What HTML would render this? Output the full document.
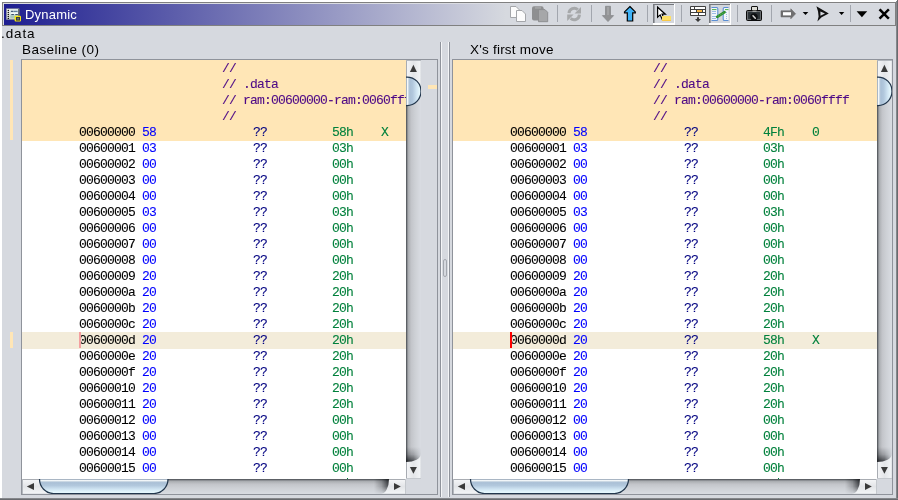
<!DOCTYPE html>
<html><head><meta charset="utf-8">
<style>
html,body{margin:0;padding:0}
body{width:898px;height:500px;position:relative;overflow:hidden;background:#d6d9df;font-family:"Liberation Sans",sans-serif}
.abs{position:absolute}
.t{position:absolute;font-family:"Liberation Mono",monospace;font-size:13px;letter-spacing:-0.8px;line-height:16px;white-space:pre}
.cm{color:#4e0a86}
.ad{color:#000}
.by{color:#0000ff}
.qq{color:#000080}
.vl{color:#00803c}
.lst{position:absolute;overflow:hidden;background:#fff}
.t,.ui{will-change:transform}
.t{-webkit-text-stroke:0.1px currentColor}
.ui{position:absolute;font-family:"Liberation Sans",sans-serif;font-size:13px;line-height:16px;white-space:pre;color:#000}
</style></head><body>
<!-- window edges -->
<div class="abs" style="left:0;top:0;width:898px;height:2px;background:#fff"></div>
<div class="abs" style="left:0;top:0;width:2px;height:500px;background:#fff"></div>
<div class="abs" style="left:896px;top:0;width:2px;height:500px;background:linear-gradient(to right,#939599,#5a5c60)"></div>
<div class="abs" style="left:896px;top:0;width:1px;height:1px;background:#fff"></div>
<div class="abs" style="left:0;top:498px;width:898px;height:2px;background:linear-gradient(to bottom,#939599,#5a5c60)"></div>

<!-- title bar -->
<div class="abs" style="left:2px;top:2px;width:894px;height:24px;box-sizing:border-box;border:1px solid #808080;border-right-color:#808080"></div>
<div class="abs" style="left:3px;top:3px;width:892px;height:1px;background:#dadce2"></div>
<div class="abs" style="left:3px;top:3px;width:1px;height:22px;background:#dadce2"></div>
<div class="abs" style="left:4px;top:4px;width:891px;height:21px;background:linear-gradient(to right,#1e1e90 0px,#d6d9df 502px,#d6d9df 891px)"></div>
<svg class="abs" style="left:0;top:0" width="898" height="27" viewBox="0 0 898 27">
<defs>
<linearGradient id="filmg" x1="0" x2="0" y1="0" y2="1"><stop offset="0" stop-color="#f4f4f0"/><stop offset="1" stop-color="#c8d0c8"/></linearGradient>
<linearGradient id="yelg" x1="0" x2="0" y1="0" y2="1"><stop offset="0" stop-color="#ffea70"/><stop offset="1" stop-color="#ffd040"/></linearGradient>
</defs>
<!-- title icon: film strip -->
<rect x="6.5" y="8.8" width="12.6" height="10.6" fill="url(#filmg)" stroke="#9aa09a" stroke-width="0.5"/>
<rect x="10.3" y="9.6" width="7.8" height="8.6" fill="#c4dce0"/>
<rect x="10.3" y="9.6" width="7.8" height="1.2" fill="#e8f2f0"/>
<rect x="11" y="10.8" width="2.5" height="1" fill="#2a3e64"/><rect x="14" y="10.8" width="3.6" height="1" fill="#4a6a90"/>
<rect x="10.5" y="12.5" width="7.5" height="1.5" fill="#f4f8f8"/>
<rect x="11.3" y="14.2" width="2.6" height="0.9" fill="#1e3050"/><rect x="15.3" y="14.2" width="2.6" height="0.9" fill="#1e3050"/>
<rect x="10.3" y="15.5" width="7.8" height="2.7" fill="#a8c8b8"/>
<rect x="18.3" y="9" width="1" height="7" fill="#3a4444"/>
<circle cx="8.3" cy="10.4" r="0.7" fill="#000"/><circle cx="8.3" cy="12.4" r="0.7" fill="#000"/><circle cx="8.3" cy="14.4" r="0.7" fill="#000"/><circle cx="8.3" cy="16.4" r="0.7" fill="#000"/><circle cx="8.3" cy="18.4" r="0.7" fill="#000"/>
<rect x="14.6" y="15.8" width="6.4" height="5.6" rx="1" fill="#f2e410"/>
<rect x="16" y="17" width="4" height="3.6" fill="#3a3e3a"/>
<circle cx="18" cy="18.8" r="1" fill="#707470"/>
<!-- copy (disabled) -->
<path d="M510.5 6.5 H516 L519.5 10 V17.5 H510.5 Z" fill="#fcfcfc" stroke="#a4a6aa" stroke-width="1"/>
<path d="M516.5 10.5 H522 L525.5 14 V21.5 H516.5 Z" fill="#fcfcfc" stroke="#a4a6aa" stroke-width="1"/>
<!-- paste (disabled) -->
<rect x="532" y="6.3" width="11.6" height="14.3" rx="2" fill="#8e8f91"/>
<rect x="535" y="6.3" width="6" height="2.5" fill="#a2a3a5"/>
<path d="M538.5 9.6 H545 L547.7 12.3 V21.7 H538.5 Z" fill="#a6a7a9" stroke="#8a8b8d" stroke-width="0.9"/>
<!-- separator -->
<rect x="557" y="5" width="1" height="17" fill="#a2a6ae"/>
<!-- refresh (disabled) -->
<path d="M569 13.2 A5.3 5.3 0 0 1 577.8 9.6" fill="none" stroke="#a6a8aa" stroke-width="3"/>
<path d="M581 7 V13.4 H574.6 Z" fill="#a6a8aa"/>
<path d="M579.4 14.6 A5.3 5.3 0 0 1 570.6 18.4" fill="none" stroke="#a6a8aa" stroke-width="3"/>
<path d="M567.2 21 V14.6 H573.6 Z" fill="#a6a8aa"/>
<rect x="591" y="5" width="1" height="17" fill="#a2a6ae"/>
<!-- down arrow (disabled) -->
<path d="M605.5 6.3 H610.5 V15.6 H613.6 L608 21.6 L602.4 15.6 H605.5 Z" fill="#929395" stroke="#838486" stroke-width="0.7"/>
<rect x="607" y="7" width="2" height="8" fill="#a2a3a5"/>
<!-- up arrow -->
<path d="M629.9 6.5 L635.3 11.9 V12.8 H632.7 V21 H627.3 V12.8 H624.5 V11.9 Z" fill="#3fb2f6" stroke="#000" stroke-width="1.2" stroke-linejoin="miter" stroke-miterlimit="2"/>
<rect x="647" y="5" width="1" height="17" fill="#a2a6ae"/>
<!-- toggle button 1 (pressed) -->
<rect x="653" y="4" width="22" height="21" fill="#fff"/>
<rect x="653" y="4" width="21" height="19" fill="#76797f"/>
<rect x="654" y="5" width="20" height="18" fill="#d4d7dd"/>
<rect x="654" y="5" width="1" height="18" fill="#9ea1a7"/>
<path d="M657.6 7.2 V17.2 L660.2 14.9 L662.4 19.8 L664.2 19 L662.1 14.2 H665.4 Z" fill="#fff" stroke="#000" stroke-width="1.2" stroke-linejoin="miter"/>
<rect x="662" y="16" width="9" height="5" fill="#ffe066"/>
<rect x="662" y="20" width="9" height="1" fill="#f8c848"/>
<rect x="681" y="5" width="1" height="17" fill="#a2a6ae"/>
<!-- table with arrow -->
<rect x="690" y="6" width="16" height="10" rx="1" fill="#3f3f3f"/>
<rect x="691" y="7" width="3" height="2" fill="#fff"/><rect x="695" y="7" width="10" height="2" fill="#fff"/>
<rect x="691" y="10" width="5" height="2" fill="#fff"/><rect x="697" y="10" width="5" height="2" fill="#f6b746"/><rect x="703" y="10" width="2" height="2" fill="#fff"/>
<rect x="691" y="13" width="7" height="2" fill="#fff"/><rect x="699" y="13" width="6" height="2" fill="#fff"/>
<path d="M697 17.2 H699 V19 H701 L698 22 L695 19 H697 Z" fill="#3a3a3a"/>
<!-- toggle button 2 (pressed) -->
<rect x="709" y="4" width="22" height="21" fill="#fff"/>
<rect x="709" y="4" width="21" height="19" fill="#76797f"/>
<rect x="710" y="5" width="20" height="18" fill="#d4d7dd"/>
<rect x="710" y="5" width="1" height="18" fill="#9ea1a7"/>
<path d="M711.5 7.5 H716.5 Q717.8 7.5 717.8 8.8 V19.2 Q717.8 20.5 716.5 20.5 H711.5 Z" fill="#f4f6fa"/>
<path d="M711.5 7.5 H716.5 Q717.8 7.5 717.8 8.8 V19.2 Q717.8 20.5 716.5 20.5 H711.5" fill="none" stroke="#5a8ed4" stroke-width="1.1"/>
<rect x="712" y="9" width="4.5" height="1.1" fill="#5cb85c"/>
<rect x="712" y="11" width="4" height="1" fill="#9dbbe4"/><rect x="712" y="13" width="4" height="1" fill="#9dbbe4"/><rect x="712" y="16" width="4" height="1" fill="#9dbbe4"/><rect x="712" y="18" width="4" height="1" fill="#9dbbe4"/>
<path d="M728.5 7.5 H724.5 Q723.2 7.5 723.2 8.8 V19.2 Q723.2 20.5 724.5 20.5 H728.5 Z" fill="#f4f6fa"/>
<path d="M728.5 7.5 H724.5 Q723.2 7.5 723.2 8.8 V19.2 Q723.2 20.5 724.5 20.5 H728.5" fill="none" stroke="#5a8ed4" stroke-width="1.1"/>
<rect x="725" y="9" width="3.5" height="1.1" fill="#5cb85c"/>
<rect x="726" y="12" width="1" height="1" fill="#9dbbe4"/><rect x="726" y="14" width="1" height="1" fill="#9dbbe4"/><rect x="726" y="16" width="1" height="1" fill="#9dbbe4"/><rect x="726" y="18" width="1" height="1" fill="#9dbbe4"/>
<path d="M717.2 16.8 L724.6 12.2" stroke="#2f8f30" stroke-width="2.6" stroke-linecap="round"/>
<path d="M718 16.2 L724 12.6" stroke="#6cc06c" stroke-width="0.8" stroke-dasharray="1 1.2"/>
<rect x="737" y="5" width="1" height="17" fill="#a2a6ae"/>
<!-- camera -->
<rect x="751.5" y="6.5" width="6" height="4.5" rx="0.5" fill="#dcdcd6" stroke="#111" stroke-width="1"/>
<rect x="746.5" y="10.5" width="15" height="10" rx="1" fill="#2c3236" stroke="#0a0a0a" stroke-width="1"/>
<rect x="747.6" y="11.6" width="12.8" height="7.8" fill="none" stroke="#74777a" stroke-width="0.9"/>
<rect x="752.5" y="10.6" width="4" height="1" fill="#c8c8c4"/>
<circle cx="754" cy="17" r="3.7" fill="#0c0e10"/>
<path d="M753 15.8 L755.3 18.3" stroke="#d4d4d4" stroke-width="1.5" stroke-linecap="round"/>
<rect x="771" y="5" width="1" height="17" fill="#a2a6ae"/>
<!-- right arrow -->
<path d="M781 10.8 H790.8 V8.8 L795.6 13.8 L790.8 18.8 V16.9 H781 Z" fill="#6f6f70" stroke="#6a6a6a" stroke-width="0.6"/>
<rect x="783" y="12.2" width="8" height="3.2" fill="#fff"/>
<path d="M802.7 12 H808.3 L805.5 15 Z" fill="#000"/>
<!-- navigate -->
<path d="M816.4 6.2 L828.8 13.4 L821.6 17.2 L817.4 21.4 L818.6 16.6 L818 11.2 Z M820.4 11.6 L825 13.6 L820.4 15.8 Z" fill="#111" fill-rule="evenodd"/>
<path d="M838.9 12 H844.3 L841.6 15 Z" fill="#000"/>
<rect x="850" y="5" width="1" height="17" fill="#a2a6ae"/>
<!-- big down triangle -->
<path d="M856.6 11.2 H867.2 L861.9 17.3 Z" fill="#000"/>
<!-- close X -->
<path d="M880.4 10.2 L888 17.8 M888 10.2 L880.4 17.8" stroke="#000" stroke-width="2.5" stroke-linecap="square"/>
</svg>
<div class="ui" style="left:25px;top:7px;color:#fff;font-size:13px;letter-spacing:0.2px">Dynamic</div>

<div class="ui" style="left:1px;top:26px;font-size:13.5px;letter-spacing:0.9px">.data</div>
<div class="ui" style="left:22px;top:42px;font-size:13.5px;letter-spacing:0.45px">Baseline (0)</div>
<div class="ui" style="left:470px;top:42px;font-size:13.5px;letter-spacing:0.22px">X's first move</div>

<!-- left margin markers -->
<div class="abs" style="left:10px;top:60px;width:3px;height:80px;background:#ffe6b6"></div>
<div class="abs" style="left:10px;top:332px;width:3px;height:16px;background:#ffe6b6"></div>

<!-- left panel -->
<div class="abs" style="left:21px;top:59px;width:417px;height:436px;box-sizing:border-box;border:1px solid #8f939b"></div>
<div class="lst" style="left:22px;top:60px;width:384px;height:419px">
<div style="position:absolute;left:0;top:0;width:384px;height:81px;background:#ffe6b6"></div>
<div style="position:absolute;left:0;top:272px;width:384px;height:17px;background:#f3ecda"></div>
<div class="t cm" style="left:200px;top:1px">//</div>
<div class="t cm" style="left:200px;top:17px">// .data</div>
<div class="t cm" style="left:200px;top:33px">// ram:00600000-ram:0060ffff</div>
<div class="t cm" style="left:200px;top:49px">//</div>
<div class="t ad" style="left:57px;top:65px">00600000</div>
<div class="t by" style="left:120px;top:65px">58</div>
<div class="t qq" style="left:231px;top:65px">??</div>
<div class="t vl" style="left:310px;top:65px">58h</div>
<div class="t vl" style="left:359px;top:65px">X</div>
<div class="t ad" style="left:57px;top:81px">00600001</div>
<div class="t by" style="left:120px;top:81px">03</div>
<div class="t qq" style="left:231px;top:81px">??</div>
<div class="t vl" style="left:310px;top:81px">03h</div>
<div class="t ad" style="left:57px;top:97px">00600002</div>
<div class="t by" style="left:120px;top:97px">00</div>
<div class="t qq" style="left:231px;top:97px">??</div>
<div class="t vl" style="left:310px;top:97px">00h</div>
<div class="t ad" style="left:57px;top:113px">00600003</div>
<div class="t by" style="left:120px;top:113px">00</div>
<div class="t qq" style="left:231px;top:113px">??</div>
<div class="t vl" style="left:310px;top:113px">00h</div>
<div class="t ad" style="left:57px;top:129px">00600004</div>
<div class="t by" style="left:120px;top:129px">00</div>
<div class="t qq" style="left:231px;top:129px">??</div>
<div class="t vl" style="left:310px;top:129px">00h</div>
<div class="t ad" style="left:57px;top:145px">00600005</div>
<div class="t by" style="left:120px;top:145px">03</div>
<div class="t qq" style="left:231px;top:145px">??</div>
<div class="t vl" style="left:310px;top:145px">03h</div>
<div class="t ad" style="left:57px;top:161px">00600006</div>
<div class="t by" style="left:120px;top:161px">00</div>
<div class="t qq" style="left:231px;top:161px">??</div>
<div class="t vl" style="left:310px;top:161px">00h</div>
<div class="t ad" style="left:57px;top:177px">00600007</div>
<div class="t by" style="left:120px;top:177px">00</div>
<div class="t qq" style="left:231px;top:177px">??</div>
<div class="t vl" style="left:310px;top:177px">00h</div>
<div class="t ad" style="left:57px;top:193px">00600008</div>
<div class="t by" style="left:120px;top:193px">00</div>
<div class="t qq" style="left:231px;top:193px">??</div>
<div class="t vl" style="left:310px;top:193px">00h</div>
<div class="t ad" style="left:57px;top:209px">00600009</div>
<div class="t by" style="left:120px;top:209px">20</div>
<div class="t qq" style="left:231px;top:209px">??</div>
<div class="t vl" style="left:310px;top:209px">20h</div>
<div class="t ad" style="left:57px;top:225px">0060000a</div>
<div class="t by" style="left:120px;top:225px">20</div>
<div class="t qq" style="left:231px;top:225px">??</div>
<div class="t vl" style="left:310px;top:225px">20h</div>
<div class="t ad" style="left:57px;top:241px">0060000b</div>
<div class="t by" style="left:120px;top:241px">20</div>
<div class="t qq" style="left:231px;top:241px">??</div>
<div class="t vl" style="left:310px;top:241px">20h</div>
<div class="t ad" style="left:57px;top:257px">0060000c</div>
<div class="t by" style="left:120px;top:257px">20</div>
<div class="t qq" style="left:231px;top:257px">??</div>
<div class="t vl" style="left:310px;top:257px">20h</div>
<div class="t ad" style="left:57px;top:273px">0060000d</div>
<div class="t by" style="left:120px;top:273px">20</div>
<div class="t qq" style="left:231px;top:273px">??</div>
<div class="t vl" style="left:310px;top:273px">20h</div>
<div class="t ad" style="left:57px;top:289px">0060000e</div>
<div class="t by" style="left:120px;top:289px">20</div>
<div class="t qq" style="left:231px;top:289px">??</div>
<div class="t vl" style="left:310px;top:289px">20h</div>
<div class="t ad" style="left:57px;top:305px">0060000f</div>
<div class="t by" style="left:120px;top:305px">20</div>
<div class="t qq" style="left:231px;top:305px">??</div>
<div class="t vl" style="left:310px;top:305px">20h</div>
<div class="t ad" style="left:57px;top:321px">00600010</div>
<div class="t by" style="left:120px;top:321px">20</div>
<div class="t qq" style="left:231px;top:321px">??</div>
<div class="t vl" style="left:310px;top:321px">20h</div>
<div class="t ad" style="left:57px;top:337px">00600011</div>
<div class="t by" style="left:120px;top:337px">20</div>
<div class="t qq" style="left:231px;top:337px">??</div>
<div class="t vl" style="left:310px;top:337px">20h</div>
<div class="t ad" style="left:57px;top:353px">00600012</div>
<div class="t by" style="left:120px;top:353px">00</div>
<div class="t qq" style="left:231px;top:353px">??</div>
<div class="t vl" style="left:310px;top:353px">00h</div>
<div class="t ad" style="left:57px;top:369px">00600013</div>
<div class="t by" style="left:120px;top:369px">00</div>
<div class="t qq" style="left:231px;top:369px">??</div>
<div class="t vl" style="left:310px;top:369px">00h</div>
<div class="t ad" style="left:57px;top:385px">00600014</div>
<div class="t by" style="left:120px;top:385px">00</div>
<div class="t qq" style="left:231px;top:385px">??</div>
<div class="t vl" style="left:310px;top:385px">00h</div>
<div class="t ad" style="left:57px;top:401px">00600015</div>
<div class="t by" style="left:120px;top:401px">00</div>
<div class="t qq" style="left:231px;top:401px">??</div>
<div class="t vl" style="left:310px;top:401px">00h</div>
<div class="t ad" style="left:57px;top:417px">00600016</div>
<div class="t by" style="left:120px;top:417px">00</div>
<div class="t qq" style="left:231px;top:417px">??</div>
<div class="t vl" style="left:310px;top:417px">00h</div>
<div style="position:absolute;left:325px;top:418px;width:1px;height:1px;background:#00803c"></div>
<div style="position:absolute;left:57px;top:272px;width:2px;height:16px;background:#f4a0a0"></div>
</div>
<svg style="position:absolute;left:406px;top:60px" width="15" height="419" viewBox="0 0 15 419">
<defs>
<linearGradient id="vtr406" x1="0" x2="1" y1="0" y2="0"><stop offset="0" stop-color="#5c6065"/><stop offset="0.067" stop-color="#5c6065"/><stop offset="0.1" stop-color="#8c8f94"/><stop offset="0.17" stop-color="#adb0b4"/><stop offset="0.35" stop-color="#c3c5ca"/><stop offset="0.6" stop-color="#cdd0d5"/><stop offset="1" stop-color="#d9dce2"/></linearGradient>
<linearGradient id="vsh406" x1="0" x2="0" y1="0" y2="1"><stop offset="0" stop-color="#16181c" stop-opacity="0"/><stop offset="0.5" stop-color="#16181c" stop-opacity="0.3"/><stop offset="1" stop-color="#16181c" stop-opacity="0.9"/></linearGradient><linearGradient id="vmg406" x1="0" x2="1" y1="0" y2="0"><stop offset="0" stop-color="#fff"/><stop offset="0.5" stop-color="#fff" stop-opacity="0.8"/><stop offset="1" stop-color="#fff" stop-opacity="0.1"/></linearGradient><mask id="vmk406" maskUnits="userSpaceOnUse" x="0" y="0" width="15" height="419"><rect x="0" y="0" width="15" height="419" fill="url(#vmg406)"/></mask>
<linearGradient id="vth406" x1="0" x2="1" y1="0" y2="0"><stop offset="0" stop-color="#a9b6c4"/><stop offset="0.067" stop-color="#a9b6c4"/><stop offset="0.1" stop-color="#f4f8fa"/><stop offset="0.14" stop-color="#d8e2ea"/><stop offset="0.25" stop-color="#aac0d6"/><stop offset="0.45" stop-color="#b2c8dd"/><stop offset="0.7" stop-color="#cfe4f2"/><stop offset="0.9" stop-color="#e4f6fc"/><stop offset="1" stop-color="#e4f6fc"/></linearGradient>
<linearGradient id="vbt406" x1="0" x2="1" y1="0" y2="0"><stop offset="0" stop-color="#a8acb2"/><stop offset="0.067" stop-color="#a8acb2"/><stop offset="0.1" stop-color="#f2f3f5"/><stop offset="0.5" stop-color="#e3e5e8"/><stop offset="0.9" stop-color="#f0f2f4"/><stop offset="1" stop-color="#dcdfe3"/></linearGradient>
</defs>
<rect x="0" y="0" width="15" height="419" fill="url(#vtr406)"/>
<rect x="0" y="387" width="15" height="15" fill="url(#vsh406)" mask="url(#vmk406)"/>
<rect x="0" y="0" width="15" height="32" fill="url(#vbt406)"/>
<rect x="0" y="0" width="15" height="1" fill="#b4b8be"/>
<path d="M3.9 12 L10.9 12 L7.4 4.8 Z" fill="#3a3a3a"/>
<path d="M0 17 H1 A14 14.25 0 0 1 1 45.5 H0 Z" fill="url(#vth406)"/><path d="M0 17 H1 A14 14.25 0 0 1 1 45.5 H0" fill="none" stroke="#22364c" stroke-width="1.25"/>
<path d="M0 419 V402 A15 8 0 0 0 15 394 V419 Z" fill="url(#vbt406)"/>
<path d="M0 418.5 H15" stroke="#c4c8cd" stroke-width="1"/>
<path d="M3.9 407 L10.9 407 L7.4 413.8 Z" fill="#3a3a3a"/>
</svg>
<svg style="position:absolute;left:22px;top:479px" width="384" height="15" viewBox="0 0 384 15">
<defs>
<linearGradient id="htr22" x1="0" x2="0" y1="0" y2="1"><stop offset="0" stop-color="#5c6065"/><stop offset="0.067" stop-color="#5c6065"/><stop offset="0.1" stop-color="#8c8f94"/><stop offset="0.17" stop-color="#adb0b4"/><stop offset="0.35" stop-color="#c3c5ca"/><stop offset="0.6" stop-color="#cdd0d5"/><stop offset="1" stop-color="#d9dce2"/></linearGradient>
<linearGradient id="hsh22" x1="0" x2="1" y1="0" y2="0"><stop offset="0" stop-color="#16181c" stop-opacity="0"/><stop offset="0.5" stop-color="#16181c" stop-opacity="0.3"/><stop offset="1" stop-color="#16181c" stop-opacity="0.9"/></linearGradient><linearGradient id="hmg22" x1="0" x2="0" y1="0" y2="1"><stop offset="0" stop-color="#fff"/><stop offset="0.5" stop-color="#fff" stop-opacity="0.8"/><stop offset="1" stop-color="#fff" stop-opacity="0.1"/></linearGradient><mask id="hmk22" maskUnits="userSpaceOnUse" x="0" y="0" width="384" height="15"><rect x="0" y="0" width="384" height="15" fill="url(#hmg22)"/></mask>
<linearGradient id="hth22" x1="0" x2="0" y1="0" y2="1"><stop offset="0" stop-color="#a9b6c4"/><stop offset="0.067" stop-color="#a9b6c4"/><stop offset="0.1" stop-color="#f4f8fa"/><stop offset="0.14" stop-color="#d8e2ea"/><stop offset="0.25" stop-color="#aac0d6"/><stop offset="0.45" stop-color="#b2c8dd"/><stop offset="0.7" stop-color="#cfe4f2"/><stop offset="0.9" stop-color="#e4f6fc"/><stop offset="1" stop-color="#e4f6fc"/></linearGradient>
<linearGradient id="hbt22" x1="0" x2="0" y1="0" y2="1"><stop offset="0" stop-color="#a8acb2"/><stop offset="0.067" stop-color="#a8acb2"/><stop offset="0.1" stop-color="#f2f3f5"/><stop offset="0.5" stop-color="#e3e5e8"/><stop offset="0.9" stop-color="#f0f2f4"/><stop offset="1" stop-color="#dcdfe3"/></linearGradient>
</defs>
<rect x="0" y="0" width="384" height="15" fill="url(#htr22)"/>
<rect x="352" y="0" width="15" height="15" fill="url(#hsh22)" mask="url(#hmk22)"/>
<rect x="0" y="0" width="32" height="15" fill="url(#hbt22)"/>
<rect x="0" y="0" width="1" height="15" fill="#b4b8be"/>
<path d="M12 3.9 L12 10.9 L4.8 7.4 Z" fill="#3a3a3a"/>
<path d="M17.5 0 A14 14.5 0 0 0 31.5 14.5 H132 A14 14.5 0 0 0 146 0 Z" fill="url(#hth22)"/><path d="M17.5 0 A14 14.5 0 0 0 31.5 14.5 H132 A14 14.5 0 0 0 146 0" fill="none" stroke="#22364c" stroke-width="1.25"/>
<path d="M384 0 H367 A8 15 0 0 1 359 15 H384 Z" fill="url(#hbt22)"/>
<path d="M383.5 0 V15" stroke="#c4c8cd" stroke-width="1"/>
<path d="M372 3.9 L372 10.9 L378.8 7.4 Z" fill="#3a3a3a"/>
</svg>
<div class="abs" style="left:428px;top:85px;width:9px;height:4px;background:#ffe6b6"></div>

<!-- divider -->
<div class="abs" style="left:440px;top:42px;width:1px;height:455px;background:#8f939b"></div>
<div class="abs" style="left:441px;top:42px;width:1px;height:455px;background:#f4f5f7"></div>
<div class="abs" style="left:448px;top:42px;width:1px;height:455px;background:#f4f5f7"></div>
<div class="abs" style="left:449px;top:42px;width:1px;height:455px;background:#8f939b"></div>
<div class="abs" style="left:443px;top:259px;width:4px;height:18px;box-sizing:border-box;border:1px solid #a3a7ae;border-radius:2px"></div>

<!-- right panel -->
<div class="abs" style="left:452px;top:59px;width:441px;height:436px;box-sizing:border-box;border:1px solid #8f939b"></div>
<div class="lst" style="left:453px;top:60px;width:424px;height:419px">
<div style="position:absolute;left:0;top:0;width:424px;height:81px;background:#ffe6b6"></div>
<div style="position:absolute;left:0;top:272px;width:424px;height:17px;background:#f3ecda"></div>
<div class="t cm" style="left:200px;top:1px">//</div>
<div class="t cm" style="left:200px;top:17px">// .data</div>
<div class="t cm" style="left:200px;top:33px">// ram:00600000-ram:0060ffff</div>
<div class="t cm" style="left:200px;top:49px">//</div>
<div class="t ad" style="left:57px;top:65px">00600000</div>
<div class="t by" style="left:120px;top:65px">58</div>
<div class="t qq" style="left:231px;top:65px">??</div>
<div class="t vl" style="left:310px;top:65px">4Fh</div>
<div class="t vl" style="left:359px;top:65px">0</div>
<div class="t ad" style="left:57px;top:81px">00600001</div>
<div class="t by" style="left:120px;top:81px">03</div>
<div class="t qq" style="left:231px;top:81px">??</div>
<div class="t vl" style="left:310px;top:81px">03h</div>
<div class="t ad" style="left:57px;top:97px">00600002</div>
<div class="t by" style="left:120px;top:97px">00</div>
<div class="t qq" style="left:231px;top:97px">??</div>
<div class="t vl" style="left:310px;top:97px">00h</div>
<div class="t ad" style="left:57px;top:113px">00600003</div>
<div class="t by" style="left:120px;top:113px">00</div>
<div class="t qq" style="left:231px;top:113px">??</div>
<div class="t vl" style="left:310px;top:113px">00h</div>
<div class="t ad" style="left:57px;top:129px">00600004</div>
<div class="t by" style="left:120px;top:129px">00</div>
<div class="t qq" style="left:231px;top:129px">??</div>
<div class="t vl" style="left:310px;top:129px">00h</div>
<div class="t ad" style="left:57px;top:145px">00600005</div>
<div class="t by" style="left:120px;top:145px">03</div>
<div class="t qq" style="left:231px;top:145px">??</div>
<div class="t vl" style="left:310px;top:145px">03h</div>
<div class="t ad" style="left:57px;top:161px">00600006</div>
<div class="t by" style="left:120px;top:161px">00</div>
<div class="t qq" style="left:231px;top:161px">??</div>
<div class="t vl" style="left:310px;top:161px">00h</div>
<div class="t ad" style="left:57px;top:177px">00600007</div>
<div class="t by" style="left:120px;top:177px">00</div>
<div class="t qq" style="left:231px;top:177px">??</div>
<div class="t vl" style="left:310px;top:177px">00h</div>
<div class="t ad" style="left:57px;top:193px">00600008</div>
<div class="t by" style="left:120px;top:193px">00</div>
<div class="t qq" style="left:231px;top:193px">??</div>
<div class="t vl" style="left:310px;top:193px">00h</div>
<div class="t ad" style="left:57px;top:209px">00600009</div>
<div class="t by" style="left:120px;top:209px">20</div>
<div class="t qq" style="left:231px;top:209px">??</div>
<div class="t vl" style="left:310px;top:209px">20h</div>
<div class="t ad" style="left:57px;top:225px">0060000a</div>
<div class="t by" style="left:120px;top:225px">20</div>
<div class="t qq" style="left:231px;top:225px">??</div>
<div class="t vl" style="left:310px;top:225px">20h</div>
<div class="t ad" style="left:57px;top:241px">0060000b</div>
<div class="t by" style="left:120px;top:241px">20</div>
<div class="t qq" style="left:231px;top:241px">??</div>
<div class="t vl" style="left:310px;top:241px">20h</div>
<div class="t ad" style="left:57px;top:257px">0060000c</div>
<div class="t by" style="left:120px;top:257px">20</div>
<div class="t qq" style="left:231px;top:257px">??</div>
<div class="t vl" style="left:310px;top:257px">20h</div>
<div class="t ad" style="left:57px;top:273px">0060000d</div>
<div class="t by" style="left:120px;top:273px">20</div>
<div class="t qq" style="left:231px;top:273px">??</div>
<div class="t vl" style="left:310px;top:273px">58h</div>
<div class="t vl" style="left:359px;top:273px">X</div>
<div class="t ad" style="left:57px;top:289px">0060000e</div>
<div class="t by" style="left:120px;top:289px">20</div>
<div class="t qq" style="left:231px;top:289px">??</div>
<div class="t vl" style="left:310px;top:289px">20h</div>
<div class="t ad" style="left:57px;top:305px">0060000f</div>
<div class="t by" style="left:120px;top:305px">20</div>
<div class="t qq" style="left:231px;top:305px">??</div>
<div class="t vl" style="left:310px;top:305px">20h</div>
<div class="t ad" style="left:57px;top:321px">00600010</div>
<div class="t by" style="left:120px;top:321px">20</div>
<div class="t qq" style="left:231px;top:321px">??</div>
<div class="t vl" style="left:310px;top:321px">20h</div>
<div class="t ad" style="left:57px;top:337px">00600011</div>
<div class="t by" style="left:120px;top:337px">20</div>
<div class="t qq" style="left:231px;top:337px">??</div>
<div class="t vl" style="left:310px;top:337px">20h</div>
<div class="t ad" style="left:57px;top:353px">00600012</div>
<div class="t by" style="left:120px;top:353px">00</div>
<div class="t qq" style="left:231px;top:353px">??</div>
<div class="t vl" style="left:310px;top:353px">00h</div>
<div class="t ad" style="left:57px;top:369px">00600013</div>
<div class="t by" style="left:120px;top:369px">00</div>
<div class="t qq" style="left:231px;top:369px">??</div>
<div class="t vl" style="left:310px;top:369px">00h</div>
<div class="t ad" style="left:57px;top:385px">00600014</div>
<div class="t by" style="left:120px;top:385px">00</div>
<div class="t qq" style="left:231px;top:385px">??</div>
<div class="t vl" style="left:310px;top:385px">00h</div>
<div class="t ad" style="left:57px;top:401px">00600015</div>
<div class="t by" style="left:120px;top:401px">00</div>
<div class="t qq" style="left:231px;top:401px">??</div>
<div class="t vl" style="left:310px;top:401px">00h</div>
<div class="t ad" style="left:57px;top:417px">00600016</div>
<div class="t by" style="left:120px;top:417px">00</div>
<div class="t qq" style="left:231px;top:417px">??</div>
<div class="t vl" style="left:310px;top:417px">00h</div>
<div style="position:absolute;left:325px;top:418px;width:1px;height:1px;background:#00803c"></div>
<div style="position:absolute;left:57px;top:272px;width:2px;height:16px;background:#ff0000"></div>
</div>
<svg style="position:absolute;left:877px;top:60px" width="15" height="419" viewBox="0 0 15 419">
<defs>
<linearGradient id="vtr877" x1="0" x2="1" y1="0" y2="0"><stop offset="0" stop-color="#5c6065"/><stop offset="0.067" stop-color="#5c6065"/><stop offset="0.1" stop-color="#8c8f94"/><stop offset="0.17" stop-color="#adb0b4"/><stop offset="0.35" stop-color="#c3c5ca"/><stop offset="0.6" stop-color="#cdd0d5"/><stop offset="1" stop-color="#d9dce2"/></linearGradient>
<linearGradient id="vsh877" x1="0" x2="0" y1="0" y2="1"><stop offset="0" stop-color="#16181c" stop-opacity="0"/><stop offset="0.5" stop-color="#16181c" stop-opacity="0.3"/><stop offset="1" stop-color="#16181c" stop-opacity="0.9"/></linearGradient><linearGradient id="vmg877" x1="0" x2="1" y1="0" y2="0"><stop offset="0" stop-color="#fff"/><stop offset="0.5" stop-color="#fff" stop-opacity="0.8"/><stop offset="1" stop-color="#fff" stop-opacity="0.1"/></linearGradient><mask id="vmk877" maskUnits="userSpaceOnUse" x="0" y="0" width="15" height="419"><rect x="0" y="0" width="15" height="419" fill="url(#vmg877)"/></mask>
<linearGradient id="vth877" x1="0" x2="1" y1="0" y2="0"><stop offset="0" stop-color="#a9b6c4"/><stop offset="0.067" stop-color="#a9b6c4"/><stop offset="0.1" stop-color="#f4f8fa"/><stop offset="0.14" stop-color="#d8e2ea"/><stop offset="0.25" stop-color="#aac0d6"/><stop offset="0.45" stop-color="#b2c8dd"/><stop offset="0.7" stop-color="#cfe4f2"/><stop offset="0.9" stop-color="#e4f6fc"/><stop offset="1" stop-color="#e4f6fc"/></linearGradient>
<linearGradient id="vbt877" x1="0" x2="1" y1="0" y2="0"><stop offset="0" stop-color="#a8acb2"/><stop offset="0.067" stop-color="#a8acb2"/><stop offset="0.1" stop-color="#f2f3f5"/><stop offset="0.5" stop-color="#e3e5e8"/><stop offset="0.9" stop-color="#f0f2f4"/><stop offset="1" stop-color="#dcdfe3"/></linearGradient>
</defs>
<rect x="0" y="0" width="15" height="419" fill="url(#vtr877)"/>
<rect x="0" y="387" width="15" height="15" fill="url(#vsh877)" mask="url(#vmk877)"/>
<rect x="0" y="0" width="15" height="32" fill="url(#vbt877)"/>
<rect x="0" y="0" width="15" height="1" fill="#b4b8be"/>
<path d="M3.9 12 L10.9 12 L7.4 4.8 Z" fill="#3a3a3a"/>
<path d="M0 17 H1 A14 14.25 0 0 1 1 45.5 H0 Z" fill="url(#vth877)"/><path d="M0 17 H1 A14 14.25 0 0 1 1 45.5 H0" fill="none" stroke="#22364c" stroke-width="1.25"/>
<path d="M0 419 V402 A15 8 0 0 0 15 394 V419 Z" fill="url(#vbt877)"/>
<path d="M0 418.5 H15" stroke="#c4c8cd" stroke-width="1"/>
<path d="M3.9 407 L10.9 407 L7.4 413.8 Z" fill="#3a3a3a"/>
</svg>
<svg style="position:absolute;left:453px;top:479px" width="424" height="15" viewBox="0 0 424 15">
<defs>
<linearGradient id="htr453" x1="0" x2="0" y1="0" y2="1"><stop offset="0" stop-color="#5c6065"/><stop offset="0.067" stop-color="#5c6065"/><stop offset="0.1" stop-color="#8c8f94"/><stop offset="0.17" stop-color="#adb0b4"/><stop offset="0.35" stop-color="#c3c5ca"/><stop offset="0.6" stop-color="#cdd0d5"/><stop offset="1" stop-color="#d9dce2"/></linearGradient>
<linearGradient id="hsh453" x1="0" x2="1" y1="0" y2="0"><stop offset="0" stop-color="#16181c" stop-opacity="0"/><stop offset="0.5" stop-color="#16181c" stop-opacity="0.3"/><stop offset="1" stop-color="#16181c" stop-opacity="0.9"/></linearGradient><linearGradient id="hmg453" x1="0" x2="0" y1="0" y2="1"><stop offset="0" stop-color="#fff"/><stop offset="0.5" stop-color="#fff" stop-opacity="0.8"/><stop offset="1" stop-color="#fff" stop-opacity="0.1"/></linearGradient><mask id="hmk453" maskUnits="userSpaceOnUse" x="0" y="0" width="424" height="15"><rect x="0" y="0" width="424" height="15" fill="url(#hmg453)"/></mask>
<linearGradient id="hth453" x1="0" x2="0" y1="0" y2="1"><stop offset="0" stop-color="#a9b6c4"/><stop offset="0.067" stop-color="#a9b6c4"/><stop offset="0.1" stop-color="#f4f8fa"/><stop offset="0.14" stop-color="#d8e2ea"/><stop offset="0.25" stop-color="#aac0d6"/><stop offset="0.45" stop-color="#b2c8dd"/><stop offset="0.7" stop-color="#cfe4f2"/><stop offset="0.9" stop-color="#e4f6fc"/><stop offset="1" stop-color="#e4f6fc"/></linearGradient>
<linearGradient id="hbt453" x1="0" x2="0" y1="0" y2="1"><stop offset="0" stop-color="#a8acb2"/><stop offset="0.067" stop-color="#a8acb2"/><stop offset="0.1" stop-color="#f2f3f5"/><stop offset="0.5" stop-color="#e3e5e8"/><stop offset="0.9" stop-color="#f0f2f4"/><stop offset="1" stop-color="#dcdfe3"/></linearGradient>
</defs>
<rect x="0" y="0" width="424" height="15" fill="url(#htr453)"/>
<rect x="392" y="0" width="15" height="15" fill="url(#hsh453)" mask="url(#hmk453)"/>
<rect x="0" y="0" width="32" height="15" fill="url(#hbt453)"/>
<rect x="0" y="0" width="1" height="15" fill="#b4b8be"/>
<path d="M12 3.9 L12 10.9 L4.8 7.4 Z" fill="#3a3a3a"/>
<path d="M17.5 0 A14 14.5 0 0 0 31.5 14.5 H161.5 A14 14.5 0 0 0 175.5 0 Z" fill="url(#hth453)"/><path d="M17.5 0 A14 14.5 0 0 0 31.5 14.5 H161.5 A14 14.5 0 0 0 175.5 0" fill="none" stroke="#22364c" stroke-width="1.25"/>
<path d="M424 0 H407 A8 15 0 0 1 399 15 H424 Z" fill="url(#hbt453)"/>
<path d="M423.5 0 V15" stroke="#c4c8cd" stroke-width="1"/>
<path d="M412 3.9 L412 10.9 L418.8 7.4 Z" fill="#3a3a3a"/>
</svg>

</body></html>
